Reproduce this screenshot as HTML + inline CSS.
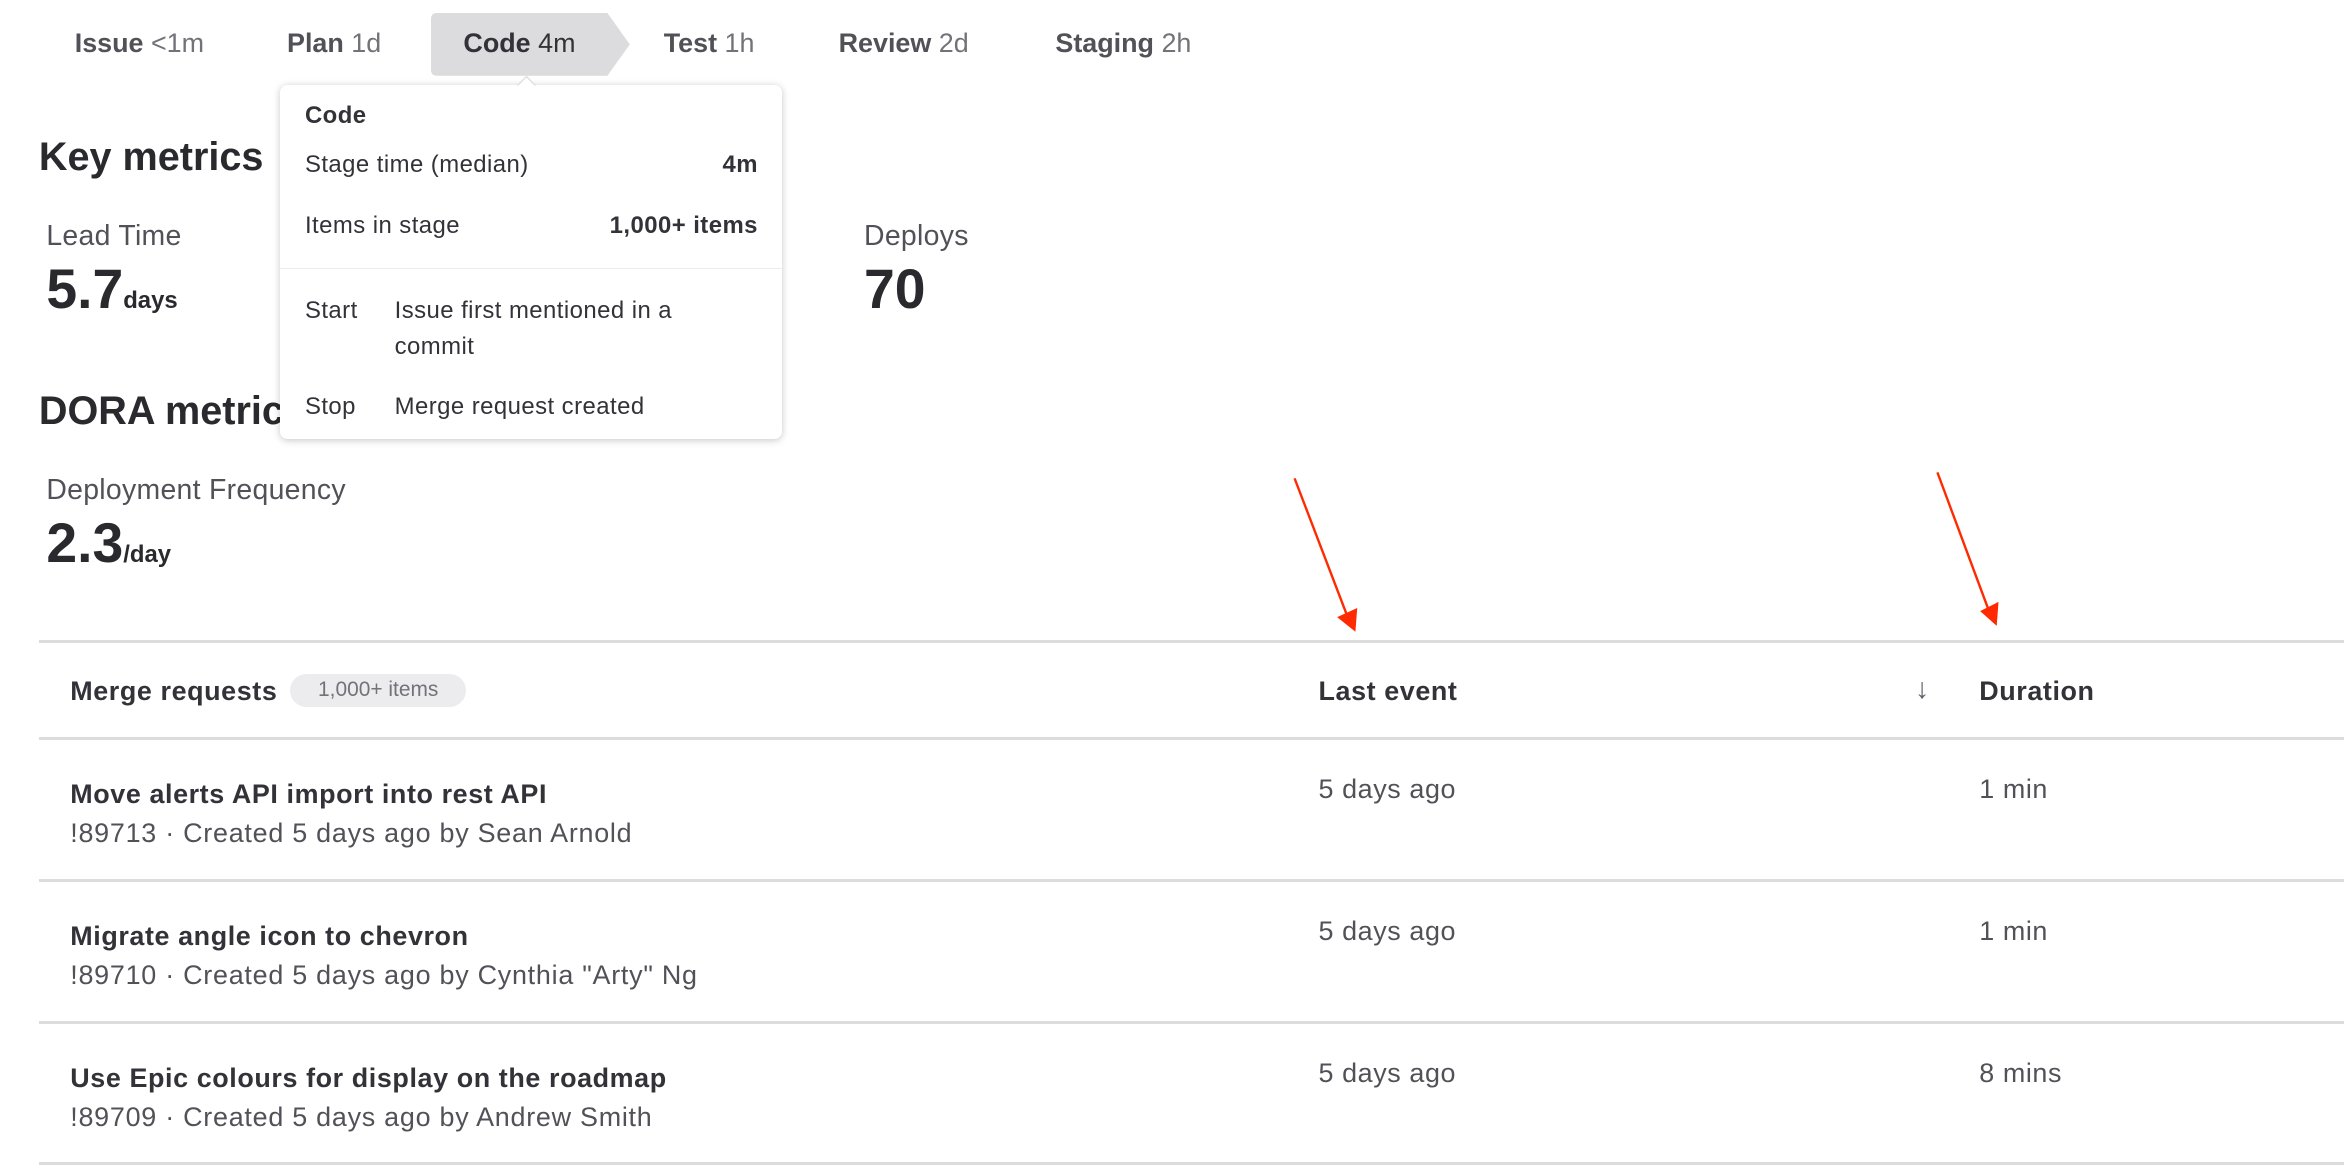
<!DOCTYPE html>
<html><head><meta charset="utf-8"><style>
html,body{margin:0;padding:0;background:#fff;}
body{width:2344px;height:1168px;overflow:hidden;}
#w{zoom:1.4949;width:1568px;height:781px;position:relative;font-family:"Liberation Sans",sans-serif;color:#333238;}
.a{position:absolute;white-space:nowrap;}
.st{font-size:18px;color:#535158;font-weight:bold;top:19px;}
.st span{font-weight:normal;color:#737278;}
.pop{position:absolute;left:187px;top:57px;width:336px;height:237px;background:#fff;border-radius:5px;box-shadow:0 1px 5px rgba(0,0,0,.22);}
.p{font-size:16px;letter-spacing:0.3px;color:#333238;}
.h{font-size:26.5px;font-weight:bold;color:#2a292e;}
.lab{font-size:19px;letter-spacing:0.2px;color:#535158;}
.big{font-size:37px;font-weight:bold;color:#2a292e;}
.big small{font-size:16px;}
.line{position:absolute;left:26px;width:1542px;height:2px;background:#dcdcde;}
.t{font-size:18px;letter-spacing:0.4px;font-weight:bold;color:#333238;}
.s{font-size:18px;letter-spacing:0.5px;color:#535158;}
.g{font-size:18px;letter-spacing:0.4px;color:#535158;}
</style></head><body><div id="w">
<div class="a st" style="left:50px">Issue <span>&lt;1m</span></div>
<div class="a st" style="left:192px">Plan <span>1d</span></div>
<svg class="a" style="left:288px;top:9px" width="134" height="42"><path d="M4 0H118L133 21L118 42H4Q0 42 0 38V4Q0 0 4 0Z" fill="#dcdcde"/></svg>
<div class="a st" style="left:310px;color:#333238">Code <span style="color:#333238">4m</span></div>
<div class="a st" style="left:444px">Test <span>1h</span></div>
<div class="a st" style="left:561px">Review <span>2d</span></div>
<div class="a st" style="left:706px">Staging <span>2h</span></div>

<div class="a h" style="left:26px;top:90px">Key metrics</div>
<div class="a lab" style="left:31px;top:147px">Lead Time</div>
<div class="a big" style="left:31px;top:172px">5.7<small>days</small></div>
<div class="a lab" style="left:578px;top:147px">Deploys</div>
<div class="a big" style="left:578px;top:172px">70</div>
<div class="a h" style="left:26px;top:260px">DORA metrics</div>
<div class="a lab" style="left:31px;top:317px">Deployment Frequency</div>
<div class="a big" style="left:31px;top:342px">2.3<small>/day</small></div>

<div class="pop">
<svg class="a" style="left:158px;top:-7px" width="14" height="8"><path d="M0 8L7 1L14 8Z" fill="#fff" stroke="#e0e0e0"/><rect x="0" y="7" width="14" height="2" fill="#fff"/></svg>
<div class="a p" style="left:17px;top:11px;font-weight:bold">Code</div>
<div class="a p" style="left:17px;top:44px">Stage time (median)</div>
<div class="a p" style="right:16px;top:44px;font-weight:bold">4m</div>
<div class="a p" style="left:17px;top:85px">Items in stage</div>
<div class="a p" style="right:16px;top:85px;font-weight:bold">1,000+ items</div>
<div class="a" style="left:0;top:122px;width:336px;height:1px;background:#ececef"></div>
<div class="a p" style="left:17px;top:142px">Start</div>
<div class="a p" style="left:77px;top:142px">Issue first mentioned in a</div>
<div class="a p" style="left:77px;top:166px">commit</div>
<div class="a p" style="left:17px;top:206px">Stop</div>
<div class="a p" style="left:77px;top:206px">Merge request created</div>
</div>

<svg class="a" style="left:0;top:0" width="1568" height="781"><g stroke="#ff2a00" stroke-width="1.6" fill="#ff2a00"><line x1="866" y1="320" x2="902" y2="414"/><path d="M896 413L906 421L907 408Z"/><line x1="1296" y1="316" x2="1331" y2="410"/><path d="M1326 409L1335 417L1336 404Z"/></g></svg>

<div class="line" style="top:428px"></div>
<div class="a t" style="left:47px;top:452px">Merge requests</div>
<div class="a" style="left:194px;top:451px;width:118px;height:22px;border-radius:11px;background:#ececef;font-size:14px;color:#737278;text-align:center;line-height:22px">1,000+ items</div>
<div class="a t" style="left:882px;top:452px">Last event</div>
<div class="a" style="left:1281px;top:450px;font-size:19px;color:#626168">↓</div>
<div class="a t" style="left:1324px;top:452px">Duration</div>
<div class="line" style="top:493px"></div>

<div class="a t" style="left:47px;top:521px">Move alerts API import into rest API</div>
<div class="a s" style="left:47px;top:547px">!89713 · Created 5 days ago by Sean Arnold</div>
<div class="a g" style="left:882px;top:518px">5 days ago</div>
<div class="a g" style="left:1324px;top:518px">1 min</div>
<div class="line" style="top:588px"></div>

<div class="a t" style="left:47px;top:616px">Migrate angle icon to chevron</div>
<div class="a s" style="left:47px;top:642px">!89710 · Created 5 days ago by Cynthia "Arty" Ng</div>
<div class="a g" style="left:882px;top:613px">5 days ago</div>
<div class="a g" style="left:1324px;top:613px">1 min</div>
<div class="line" style="top:683px"></div>

<div class="a t" style="left:47px;top:711px">Use Epic colours for display on the roadmap</div>
<div class="a s" style="left:47px;top:737px">!89709 · Created 5 days ago by Andrew Smith</div>
<div class="a g" style="left:882px;top:708px">5 days ago</div>
<div class="a g" style="left:1324px;top:708px">8 mins</div>
<div class="line" style="top:777px"></div>
</div></body></html>
